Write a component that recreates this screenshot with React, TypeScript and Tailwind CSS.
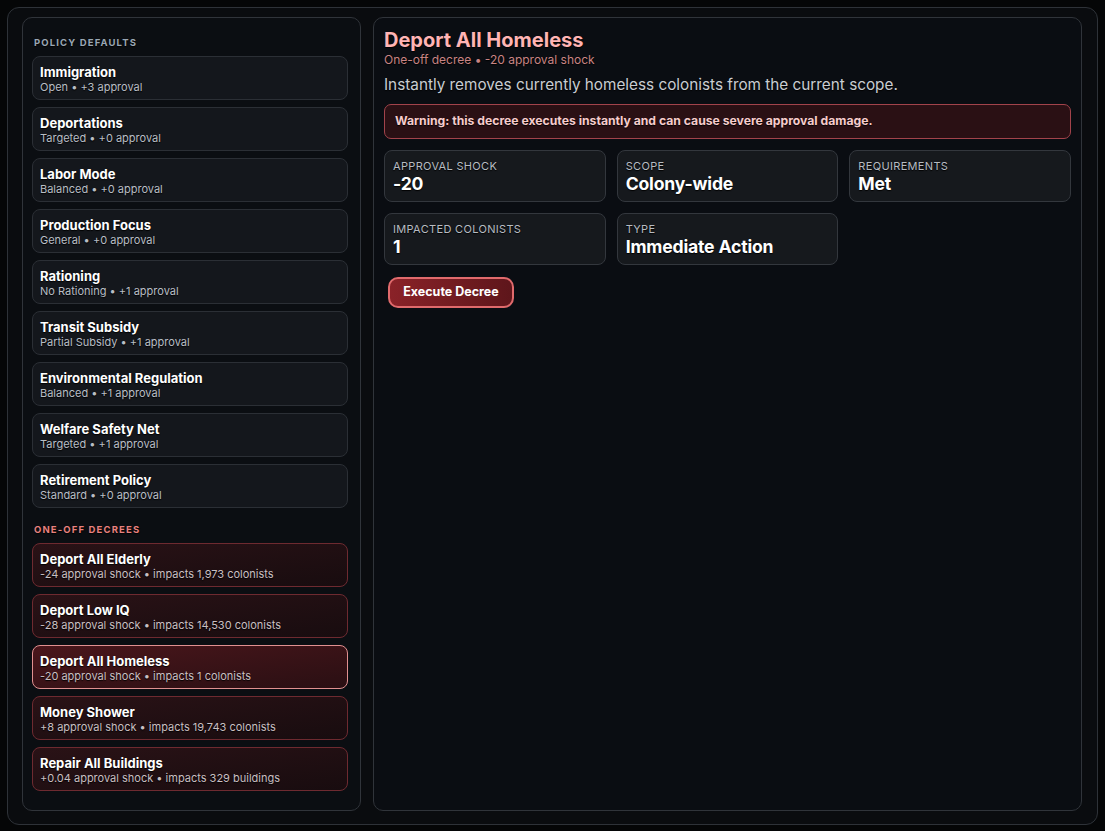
import React from "react";

const policies = [
  { name: "Immigration", detail: "Open • +3 approval" },
  { name: "Deportations", detail: "Targeted • +0 approval" },
  { name: "Labor Mode", detail: "Balanced • +0 approval" },
  { name: "Production Focus", detail: "General • +0 approval" },
  { name: "Rationing", detail: "No Rationing • +1 approval" },
  { name: "Transit Subsidy", detail: "Partial Subsidy • +1 approval" },
  { name: "Environmental Regulation", detail: "Balanced • +1 approval" },
  { name: "Welfare Safety Net", detail: "Targeted • +1 approval" },
  { name: "Retirement Policy", detail: "Standard • +0 approval" },
];

const decrees = [
  { name: "Deport All Elderly", detail: "-24 approval shock • impacts 1,973 colonists" },
  { name: "Deport Low IQ", detail: "-28 approval shock • impacts 14,530 colonists" },
  { name: "Deport All Homeless", detail: "-20 approval shock • impacts 1 colonists", active: true },
  { name: "Money Shower", detail: "+8 approval shock • impacts 19,743 colonists" },
  { name: "Repair All Buildings", detail: "+0.04 approval shock • impacts 329 buildings" },
];

const stats = [
  { label: "Approval Shock", value: "-20" },
  { label: "Scope", value: "Colony-wide" },
  { label: "Requirements", value: "Met" },
  { label: "Impacted Colonists", value: "1" },
  { label: "Type", value: "Immediate Action" },
];

const shadow = "[text-shadow:0_1px_1px_rgba(0,0,0,0.95)]";

export default function App() {
  return (
    <div
      className={`w-[1105px] h-[831px] bg-[#050607] p-[7px] ${shadow}`}
      style={{ fontFamily: "Inter, 'Noto Sans', sans-serif" }}
    >
      <div className="h-[818px] rounded-[12px] border border-[#2e3238] bg-[#0a0c0f] pl-[14px] pr-[15px] pt-[9px] flex gap-[12px]">
        {/* Left list */}
        <aside className="w-[339px] h-[794px] shrink-0 rounded-[10px] border border-[#30343a] bg-[#0b0e12] pl-[9px] pr-[12px] pt-[19px]">
          <div className="text-[9.5px] font-bold tracking-[0.12em] text-[#9aa7b4] pl-[2px] leading-[12px]">
            POLICY DEFAULTS
          </div>
          <div className="mt-[7px] flex flex-col gap-[7px]">
            {policies.map((p) => (
              <div
                key={p.name}
                className="h-[44px] rounded-[8px] border border-[#2b2f35] bg-[#14171c] px-[7px] pt-[7px]"
              >
                <div className="text-[13px] font-bold text-white leading-[16px]">{p.name}</div>
                <div className="text-[11px] text-[#b9bec5] leading-[14px]">{p.detail}</div>
              </div>
            ))}
          </div>
          <div className="mt-[16px] text-[9.5px] font-bold tracking-[0.12em] text-[#e8817f] pl-[2px] leading-[12px]">
            ONE-OFF DECREES
          </div>
          <div className="mt-[7px] flex flex-col gap-[7px]">
            {decrees.map((d) => (
              <div
                key={d.name}
                className={`h-[44px] rounded-[8px] border px-[7px] pt-[7px] ${
                  d.active
                    ? "border-[#e09090] bg-gradient-to-br from-[#4a161b] to-[#2a0f13]"
                    : "border-[#6e2a30] bg-gradient-to-br from-[#2a1216] to-[#180c0f]"
                }`}
              >
                <div className="text-[13px] font-bold text-white leading-[16px]">{d.name}</div>
                <div className="text-[11px] text-[#c9bfc1] leading-[14px]">{d.detail}</div>
              </div>
            ))}
          </div>
        </aside>

        {/* Detail panel */}
        <main className="flex-1 h-[794px] rounded-[10px] border border-[#30343a] bg-[#0a0d12] pl-[10px] pr-[10px] pt-[10px]">
          <h1 className="text-[20px] font-bold text-[#ffb4b4] leading-[25px]">Deport All Homeless</h1>
          <div className="text-[12px] text-[#c98484] leading-[14px]">One-off decree • -20 approval shock</div>
          <p className="mt-[8px] text-[15.3px] text-[#c9cdd2] leading-[20px]">
            Instantly removes currently homeless colonists from the current scope.
          </p>
          <div className="mt-[9px] h-[35px] rounded-[7px] border border-[#a2434b] bg-[#2a1014] px-[10px] flex items-center">
            <span className="text-[12.2px] font-bold text-[#f6cccc]">
              Warning: this decree executes instantly and can cause severe approval damage.
            </span>
          </div>
          <div className="mt-[11px] grid grid-cols-3 gap-[11px]">
            {stats.map((s) => (
              <div
                key={s.label}
                className="h-[52px] rounded-[8px] border border-[#33373d] bg-[#16191d] px-[8px] pt-[8px]"
              >
                <div className="text-[11px] uppercase tracking-[0.03em] text-[#b7bcc2] leading-[14px]">{s.label}</div>
                <div className="text-[17.6px] font-bold text-white leading-[22px] tracking-[-0.01em]">{s.value}</div>
              </div>
            ))}
          </div>
          <button className="mt-[12px] ml-[4px] h-[31px] w-[126px] rounded-[10px] border-2 border-[#e06a6c] bg-gradient-to-r from-[#8a2228] to-[#5e161b] text-[12.5px] font-bold text-white">
            Execute Decree
          </button>
        </main>
      </div>
    </div>
  );
}
